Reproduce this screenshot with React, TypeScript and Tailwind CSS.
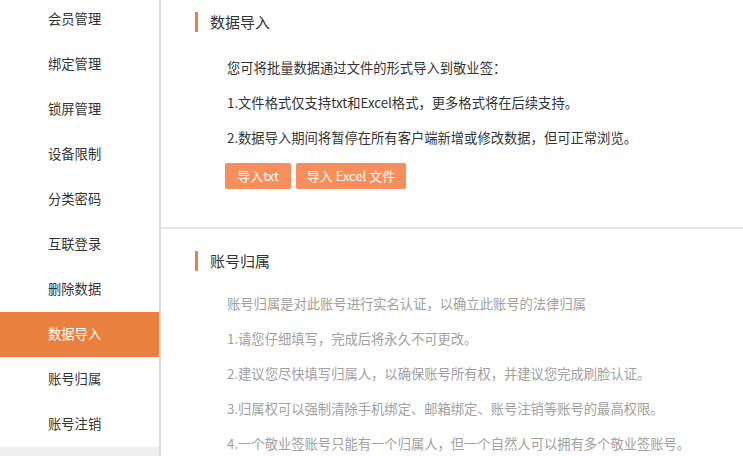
import React from 'react';

const MENU = ['会员管理', '绑定管理', '锁屏管理', '设备限制', '分类密码', '互联登录', '删除数据', '数据导入', '账号归属', '账号注销'];

const SectionTitle: React.FC<{ title: string }> = ({ title }) => (
  <div className="flex items-center h-[20px] pl-[34px]">
    <div className="w-[3px] h-[20px] bg-[#e9804b]"></div>
    <span className="ml-[12px] text-[15px] text-[#333]">{title}</span>
  </div>
);

export default function App() {
  return (
    <div className="w-[743px] h-[456px] overflow-hidden bg-white font-['Microsoft_YaHei','Noto_Sans_CJK_SC',sans-serif]">
      <div className="flex -mt-[3px] h-[459px]">
        {/* Sidebar */}
        <div className="w-[161px] shrink-0 border-r-2 border-[#dcdcdc] flex flex-col">
          {MENU.map((m) => (
            <div
              key={m}
              className={`h-[45px] shrink-0 flex items-center pl-[48px] pb-[2px] text-[13.3px] ${m === '数据导入' ? 'bg-[#e9803f] text-white' : 'text-[#333]'}`}
            >
              {m}
            </div>
          ))}
          <div className="flex-1 bg-[#efefef]"></div>
        </div>

        {/* Content */}
        <div className="flex-1 flex flex-col">
          <div className="h-[230px] shrink-0 pt-[15px]">
            <SectionTitle title="数据导入" />
            <div className="mt-[18px] pl-[66px] text-[13.3px] leading-[35px] text-[#333]">
              <p>您可将批量数据通过文件的形式导入到敬业签：</p>
              <p>1.文件格式仅支持txt和Excel格式，更多格式将在后续支持。</p>
              <p>2.数据导入期间将暂停在所有客户端新增或修改数据，但可正常浏览。</p>
            </div>
            <div className="mt-[8px] pl-[64px] flex gap-[5px]">
              <button className="w-[66px] h-[26px] rounded-[2px] bg-[#f68f5b] text-white text-[13px]">导入txt</button>
              <button className="w-[110px] h-[26px] rounded-[2px] bg-[#f68f5b] text-white text-[13px]">导入 Excel 文件</button>
            </div>
          </div>
          <div className="h-[2px] bg-[#e6e6e6] shrink-0"></div>
          <div className="flex-1 pt-[22px]">
            <SectionTitle title="账号归属" />
            <div className="mt-[15px] pl-[66px] text-[13.3px] leading-[35px] text-[#a0a0a0]">
              <p>账号归属是对此账号进行实名认证，以确立此账号的法律归属</p>
              <p>1.请您仔细填写，完成后将永久不可更改。</p>
              <p>2.建议您尽快填写归属人，以确保账号所有权，并建议您完成刷脸认证。</p>
              <p>3.归属权可以强制清除手机绑定、邮箱绑定、账号注销等账号的最高权限。</p>
              <p>4.一个敬业签账号只能有一个归属人，但一个自然人可以拥有多个敬业签账号。</p>
            </div>
          </div>
        </div>
      </div>
    </div>
  );
}
